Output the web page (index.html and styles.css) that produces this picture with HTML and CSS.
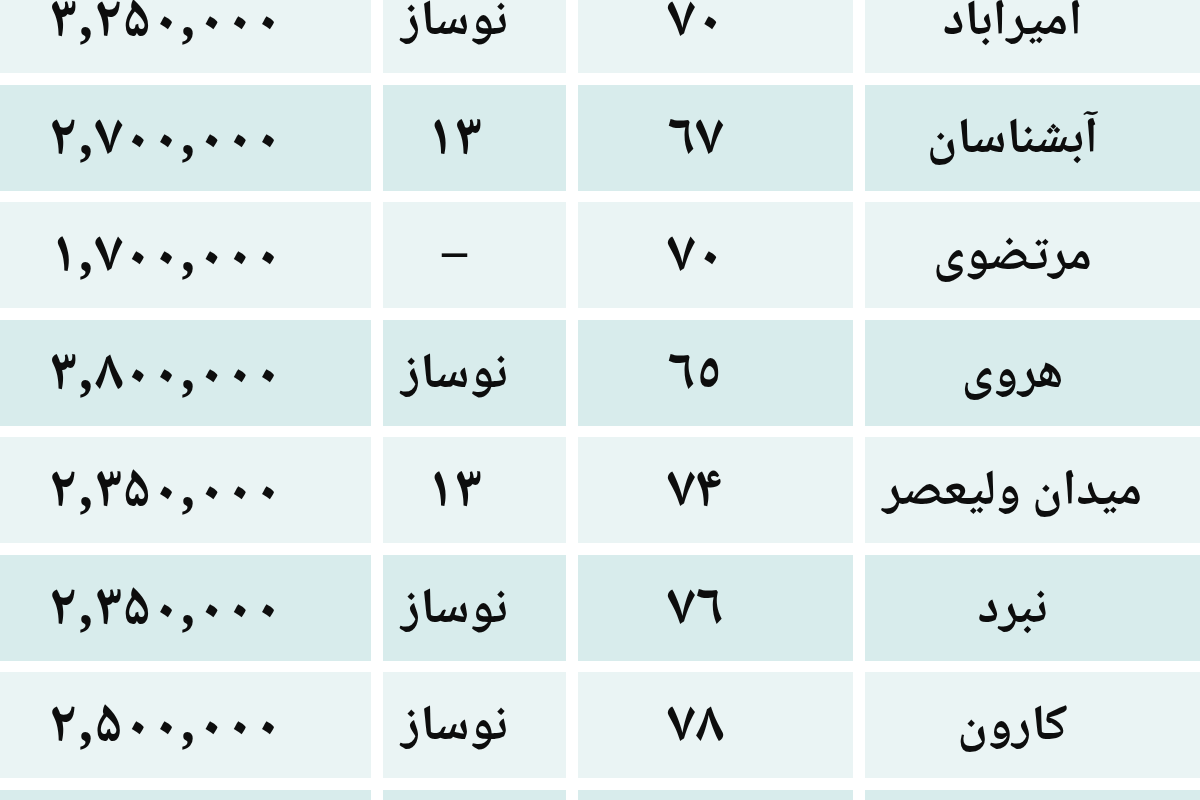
FILE: index.html
```html
<!DOCTYPE html>
<html lang="fa" dir="rtl">
<head>
<meta charset="utf-8">
<title>قیمت مسکن</title>
<link rel="stylesheet" href="styles.css">
</head>
<body>
<div class="table">
  <div class="cell odd">امیرآباد</div><div class="cell odd num">۷۰</div><div class="cell odd">نوساز</div><div class="cell odd num">۳,۲۵۰,۰۰۰</div>
  <div class="cell even">آبشناسان</div><div class="cell even num">٦۷</div><div class="cell even num">۱۳</div><div class="cell even num">۲,۷۰۰,۰۰۰</div>
  <div class="cell odd">مرتضوی</div><div class="cell odd num">۷۰</div><div class="cell odd">–</div><div class="cell odd num">۱,۷۰۰,۰۰۰</div>
  <div class="cell even">هروی</div><div class="cell even num">٦٥</div><div class="cell even">نوساز</div><div class="cell even num">۳,۸۰۰,۰۰۰</div>
  <div class="cell odd">میدان ولیعصر</div><div class="cell odd num">۷۴</div><div class="cell odd num">۱۳</div><div class="cell odd num">۲,۳۵۰,۰۰۰</div>
  <div class="cell even">نبرد</div><div class="cell even num">۷٦</div><div class="cell even">نوساز</div><div class="cell even num">۲,۳۵۰,۰۰۰</div>
  <div class="cell odd">کارون</div><div class="cell odd num">۷۸</div><div class="cell odd">نوساز</div><div class="cell odd num">۲,۵۰۰,۰۰۰</div>
  <div class="cell even"></div><div class="cell even"></div><div class="cell even"></div><div class="cell even"></div>
</div>
</body>
</html>
```

FILE: styles.css
```css
html, body {
  margin: 0;
  padding: 0;
  background: #ffffff;
  overflow: hidden;
}

body {
  width: 1200px;
  height: 800px;
}

.table {
  direction: rtl;
  display: grid;
  grid-template-columns: 335px 275px 183px 371px;
  grid-auto-rows: 106px;
  column-gap: 12px;
  row-gap: 11.5px;
  margin-top: -33px;
  font-family: "Noto Naskh Arabic", "Noto Sans Arabic", "DejaVu Sans", sans-serif;
  font-size: 50px;
  font-weight: 700;
  color: #0d0d0d;
}

.cell {
  display: flex;
  align-items: center;
  justify-content: center;
  padding-right: 40px;
  padding-top: 8px;
  box-sizing: border-box;
  white-space: nowrap;
  line-height: 1;
}

.num {
  font-size: 58px;
  letter-spacing: 3px;
}

.odd {
  background: #eaf4f4;
}

.even {
  background: #d8ecec;
}
```
